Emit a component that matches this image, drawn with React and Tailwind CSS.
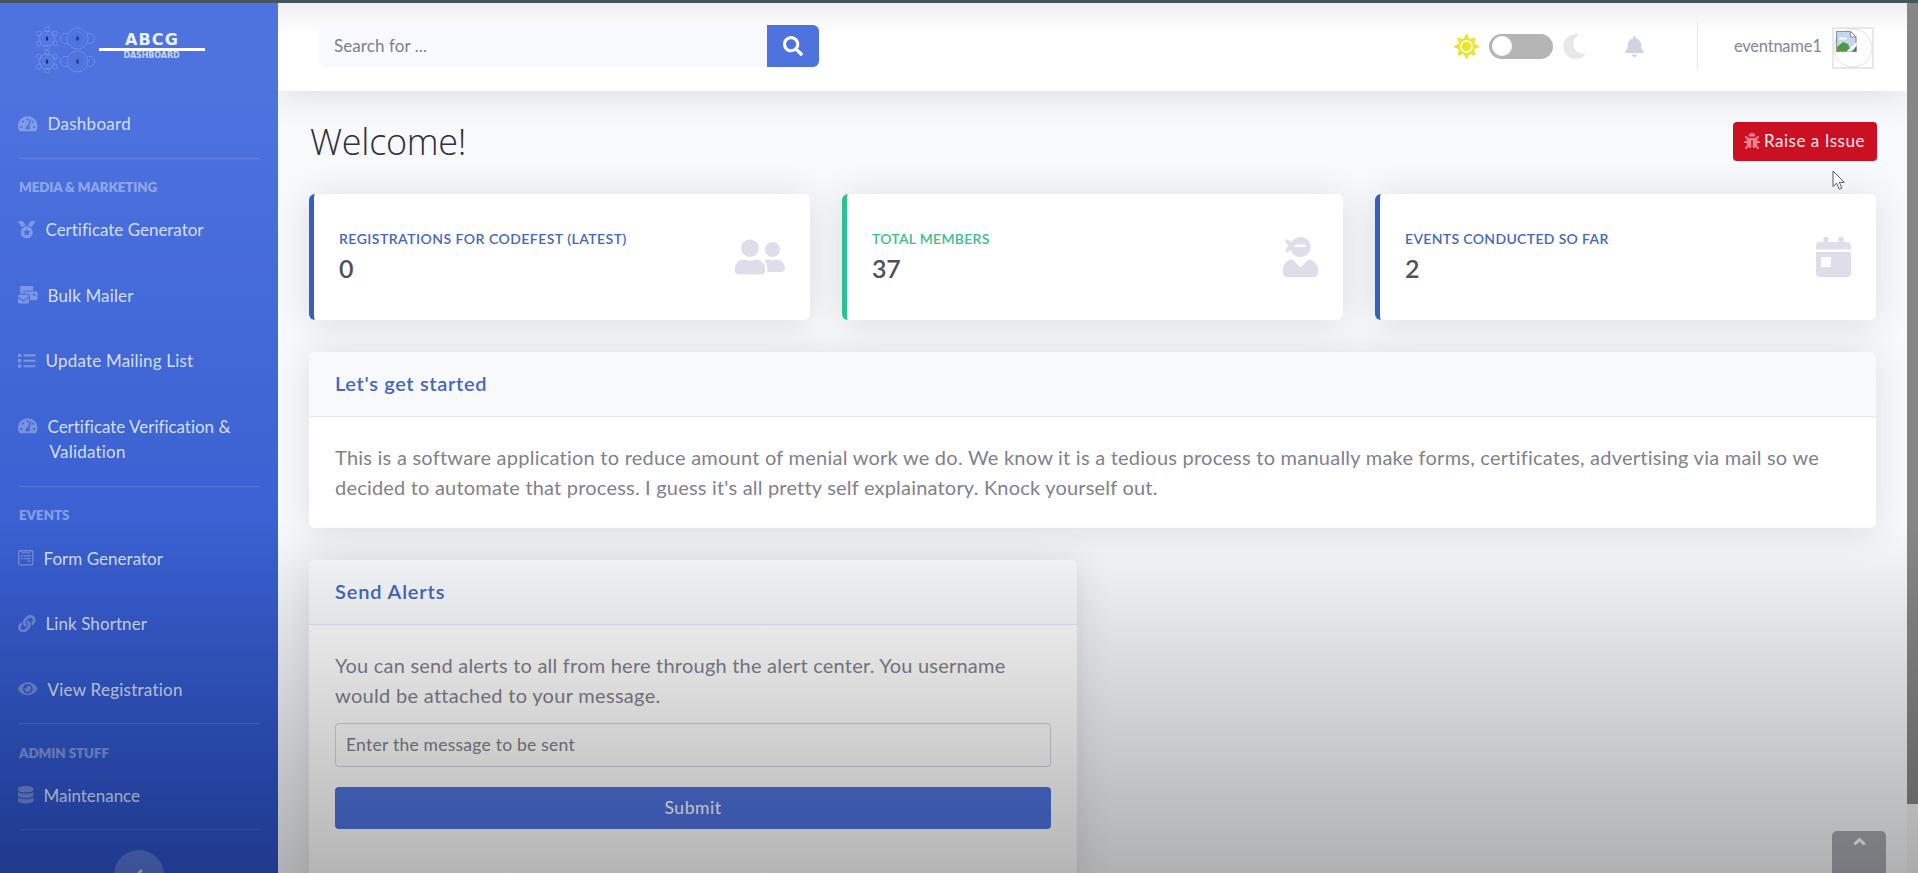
import React from "react";
import {
  FaTachometerAlt,
  FaMedal,
  FaMailBulk,
  FaList,
  FaWpforms,
  FaLink,
  FaEye,
  FaDatabase,
  FaSearch,
  FaBell,
  FaBug,
  FaSun,
  FaMoon,
  FaUserFriends,
  FaUserNinja,
  FaCalendarDay,
  FaAngleUp,
  FaAngleLeft,
} from "react-icons/fa";

function Gear({ x, y, large }) {
  const r = large ? 10.5 : 7.5;
  return (
    <g transform={`translate(${x} ${y})`}>
      <circle r={r} />
      {large ? (
        <>
          <path d="M-10-5h-4l-3 3v4l3 3h4M10-5h4l3 3v4l-3 3h-4" />
          <circle r="7" strokeOpacity="0.2" />
        </>
      ) : (
        <>
          <circle cx="-8" cy="-5" r="2.5" />
          <circle cx="8" cy="-5" r="2.5" />
          <circle cx="-8" cy="5" r="2.5" />
          <circle cx="8" cy="5" r="2.5" />
          <circle cx="0" cy="-9" r="2.5" />
          <circle cx="0" cy="9" r="2.5" />
          <circle r="4" strokeOpacity="0.35" />
        </>
      )}
      <rect x="-1" y="-2" width="2" height="4" fill="#1f2f86" stroke="none" />
    </g>
  );
}

function Logo() {
  return (
    <div className="flex h-[88px] shrink-0 pl-[33px] pt-[21px]">
      <svg viewBox="33 24 63 52" className="h-[52px] w-[63px]" fill="none" stroke="#86a6f2" strokeOpacity="0.5" strokeWidth="1">
        <Gear x={47} y={38.5} />
        <Gear x={77.5} y={38.5} large />
        <Gear x={47} y={61.5} />
        <Gear x={77.5} y={61.5} large />
      </svg>
      <div className="ml-[2.5px] flex w-[106px] flex-col items-center pt-[7px] font-['DejaVu_Sans','Lato',sans-serif] font-bold text-[#eaf2ff]">
        <span className="h-[17px] pl-px text-[16px] leading-[18px] tracking-[1.1px]">ABCG</span>
        <span className="h-[3px] w-full shrink-0 bg-white" />
        <span className="text-[8px] leading-[10px] tracking-[-0.1px] text-[#c4d5fb]">DASHBOARD</span>
      </div>
    </div>
  );
}

function NavItem({ icon: Icon, iconClass, label, track, second }) {
  return (
    <a className="flex shrink-0 py-5 pl-[18px] text-[17px] leading-[25.5px] text-[#d3def8]">
      <Icon className={`mt-[3.5px] h-[17.5px] shrink-0 text-white/30 ${iconClass}`} />
      <span className={`ml-[10px] whitespace-nowrap ${track}`}>
        {label}
        {second && (
          <>
            <br />
            <span className="ml-[2px] tracking-[0.22px]">{second}</span>
          </>
        )}
      </span>
    </a>
  );
}

function NavHeading({ children, track }) {
  return (
    <div className="flex h-[40.75px] shrink-0 flex-col pl-[19px]">
      <div className="mr-[18px] mt-px h-px bg-white/15" />
      <div className={`mt-[18.5px] text-[13.3px] font-extrabold leading-5 text-white/40 ${track}`}>{children}</div>
    </div>
  );
}

function Sidebar() {
  return (
    <aside className="flex h-full w-[278px] shrink-0 flex-col overflow-hidden bg-linear-to-b from-[#4e73df] from-10% to-[#2b51c7]">
      <Logo />
      <NavItem icon={FaTachometerAlt} iconClass="w-[19.5px]" label="Dashboard" track="tracking-[0.28px]" />
      <NavHeading track="tracking-[-0.10px]">MEDIA &amp; MARKETING</NavHeading>
      <NavItem icon={FaMedal} iconClass="w-[17.5px]" label="Certificate Generator" track="tracking-[-0.02px]" />
      <NavItem icon={FaMailBulk} iconClass="w-[19.5px]" label="Bulk Mailer" track="tracking-[0.13px]" />
      <NavItem icon={FaList} iconClass="w-[17.5px]" label="Update Mailing List" track="tracking-[0.2px]" />
      <NavItem icon={FaTachometerAlt} iconClass="w-[19.5px]" label="Certificate Verification &" second="Validation" track="tracking-[-0.02px]" />
      <NavHeading track="tracking-[0px]">EVENTS</NavHeading>
      <NavItem icon={FaWpforms} iconClass="w-[15.5px]" label="Form Generator" track="tracking-[0.03px]" />
      <NavItem icon={FaLink} iconClass="w-[17.5px]" label="Link Shortner" track="tracking-[0.08px]" />
      <NavItem icon={FaEye} iconClass="w-[19.5px]" label="View Registration" track="tracking-[0.25px]" />
      <NavHeading track="tracking-[-0.03px]">ADMIN STUFF</NavHeading>
      <NavItem icon={FaDatabase} iconClass="w-[15.5px]" label="Maintenance" track="tracking-[-0.03px]" />
      <div className="ml-[19px] mr-[18px] mt-px h-px shrink-0 bg-white/10" />
      <button className="ml-[114px] mt-5 flex size-[50px] shrink-0 items-center justify-center rounded-full bg-white/20">
        <FaAngleLeft className="size-[18px] text-white/60" />
      </button>
    </aside>
  );
}

function BrokenAvatar() {
  return (
    <svg viewBox="0 0 42 42" className="mt-[3px] size-[42px]">
      <rect x="1" y="1" width="40" height="40" fill="#fff" stroke="#e8e8ea" strokeWidth="2" />
      <circle cx="21" cy="21" r="19" fill="#fff" stroke="#e0e0e5" strokeWidth="1" />
      <path d="M4.5 4.5h14l5.500 5.500v14.500h-19.500z" fill="#c5d6f2" stroke="#8f9399" strokeWidth="1.200" />
      <path d="M18.500 4.500v5.500h5.500z" fill="#fff" stroke="#8f9399" strokeWidth="1" />
      <path d="M7 12.500c0-2 3-2.500 4-1.500 2-1 4 0 4 1.500z" fill="#fff" />
      <path d="M5 24v-4l6-5 5 2 3 7z" fill="#4f9a45" />
      <path d="M14.500 24.500 24.500 15v3.500L19 24.500z" fill="#fff" />
      <path d="M20 24.500 24.500 19.500v5z" fill="#3f7f45" />
    </svg>
  );
}

function TopBar() {
  return (
    <header className="relative z-10 flex h-[88px] shrink-0 items-center bg-linear-to-b from-[#efefef] to-white to-35% pb-[2px] pl-[41px] pr-[33px] shadow-[0_3px_35px_rgba(58,59,69,0.15)]">
      <div className="flex h-[42px]">
        <div className="flex w-[448px] items-center rounded-l-md bg-[#f8f9fc] pl-[15px] text-[17px] tracking-[0.08px] text-[#7d7f88]">Search for ...</div>
        <button className="flex w-[51.5px] items-center justify-center rounded-r-md bg-[#4e73df]">
          <FaSearch className="size-[20px] text-white" />
        </button>
      </div>
      <div className="ml-auto flex items-center">
        <FaSun className="size-[25px] text-[#e9e534]" />
        <div className="ml-[10px] flex h-[25px] w-[64px] items-center rounded-full bg-[#b5b5b5] px-[3px]">
          <div className="size-[20px] rounded-full bg-white" />
        </div>
        <FaMoon className="ml-[9px] size-[25px] text-[#e8e8e9]" />
        <FaBell className="ml-[38px] h-[21px] w-[19px] text-[#d1d3e2]" />
        <div className="ml-[53px] h-[48px] w-px bg-[#e3e6f0]" />
        <span className="ml-[36px] w-[88px] whitespace-nowrap text-[16.5px] tracking-[-0.23px] text-[#858796]">eventname1</span>
        <div className="ml-[10px]">
          <BrokenAvatar />
        </div>
      </div>
    </header>
  );
}

function StatCard({ label, value, icon: Icon, iconClass, border, color, track }) {
  return (
    <div className={`flex h-[126px] flex-1 items-center rounded-md border-l-[5px] bg-white pl-[25px] pr-[25px] shadow-[0_3px_35px_rgba(58,59,69,0.15)] ${border}`}>
      <div className="pb-[2px]">
        <div className={`whitespace-nowrap text-[14px] font-semibold leading-5 ${color} ${track}`}>{label}</div>
        <div className="mt-1 text-[25px] font-semibold leading-[30px] tracking-[-0.2px] text-[#4f5059]">{value}</div>
      </div>
      <Icon className={`ml-auto h-[40px] text-[#dfddea] ${iconClass}`} />
    </div>
  );
}

function Panel({ title, track, className, children }) {
  return (
    <section className={`shrink-0 overflow-hidden rounded-md bg-white shadow-[0_3px_35px_rgba(58,59,69,0.15)] ${className}`}>
      <div className={`h-[65px] border-b border-[#e3e6f0] bg-[#f8f9fc] px-[26px] text-[20px] font-semibold leading-[62px] text-[#4467bd] ${track}`}>{title}</div>
      <div className="px-[26px] pt-[25px] text-[20px] leading-[30px] text-[#7f818c]">{children}</div>
    </section>
  );
}

function Content() {
  return (
    <main className="flex min-h-0 flex-1 flex-col px-[31px] pt-[30.500px]">
      <div className="flex h-[39px] shrink-0 items-center justify-between">
        <h1 className="pl-px font-['Open_Sans',sans-serif] text-[36px] font-light leading-[39px] tracking-[-0.3px] text-[#2f3038]">Welcome!</h1>
        <button className="mr-[-1px] flex h-[39px] w-[144px] items-center rounded-[4px] bg-[#cb1024] pl-[11px] text-[17px] tracking-[0.52px] text-[#ffe9ec]">
          <FaBug className="mr-[4px] size-[16px] text-[#f0808c]" />
          <span className="whitespace-nowrap">Raise a Issue</span>
        </button>
      </div>
      <div className="mt-[33px] flex shrink-0 gap-8">
        <StatCard label="REGISTRATIONS FOR CODEFEST (LATEST)" value="0" icon={FaUserFriends} iconClass="w-[50px]" border="border-[#3560bd]" color="text-[#4467bd]" track="tracking-[0.47px]" />
        <StatCard label="TOTAL MEMBERS" value="37" icon={FaUserNinja} iconClass="w-[35px]" border="border-[#2cc193]" color="text-[#3dbd8b]" track="tracking-[0.27px]" />
        <StatCard label="EVENTS CONDUCTED SO FAR" value="2" icon={FaCalendarDay} iconClass="w-[35px]" border="border-[#3560bd]" color="text-[#4467bd]" track="tracking-[0.34px]" />
      </div>
      <Panel title="Let's get started" track="tracking-[0.66px]" className="mt-[32.500px] h-[176px]">
        <p className="whitespace-nowrap tracking-[0.24px]">
          This is a software application to reduce amount of menial work we do. We know it is a tedious process to manually make forms, certificates, advertising via mail so we
          <br />
          <span className="tracking-[0.2px]">decided to automate that process. I guess it's all pretty self explainatory. Knock yourself out.</span>
        </p>
      </Panel>
      <Panel title="Send Alerts" track="tracking-[0.86px]" className="mt-[31.500px] h-[360px] w-[768px]">
        <p className="whitespace-nowrap tracking-[0.22px]">
          You can send alerts to all from here through the alert center. You username
          <br />
          <span className="tracking-[0.31px]">would be attached to your message.</span>
        </p>
        <div className="mt-[13px] flex h-[44px] items-center rounded-[4px] border border-[#d1d3dc] pl-[10px] text-[17.5px] tracking-[0.24px] text-[#7d7f88]">
          Enter the message to be sent
        </div>
        <button className="mt-[20px] flex h-[42px] w-full items-center justify-center rounded-[4px] bg-[#4e73df] text-[17.5px] tracking-[0.54px] text-white">
          Submit
        </button>
      </Panel>
    </main>
  );
}

export default function App() {
  return (
    <div className="relative flex h-[873px] w-full flex-col overflow-hidden bg-[#f8f9fc] font-['Lato','Liberation_Sans',sans-serif]">
      <div className="h-[3px] shrink-0 bg-[#44545e]" />
      <div className="flex min-h-0 flex-1">
        <Sidebar />
        <div className="flex min-w-0 flex-1 flex-col overflow-hidden">
          <TopBar />
          <Content />
        </div>
        <div className="w-[11px] shrink-0 bg-[#f1f1f1]">
          <div className="h-[801px] bg-[#868686]" />
        </div>
      </div>

      <div className="absolute left-[1832px] top-[831px] flex h-[60px] w-[54px] justify-center rounded-t-[5px] bg-[#a8aab1] pt-px">
        <FaAngleUp className="size-[19px] text-white" />
      </div>

      <svg viewBox="0 0 14 21" className="absolute left-[1832px] top-[170px] h-[21px] w-[14px]">
        <path d="M1 1v15.500l3.600-3.300 2.700 6 2.600-1.200-2.600-5.700h5z" fill="#fff" stroke="#55565c" strokeWidth="1" strokeLinejoin="round" />
      </svg>

      <div className="pointer-events-none absolute inset-x-0 bottom-0 z-20 h-[353px] bg-linear-to-b from-transparent via-black/9 via-30% to-black/29" />
    </div>
  );
}
